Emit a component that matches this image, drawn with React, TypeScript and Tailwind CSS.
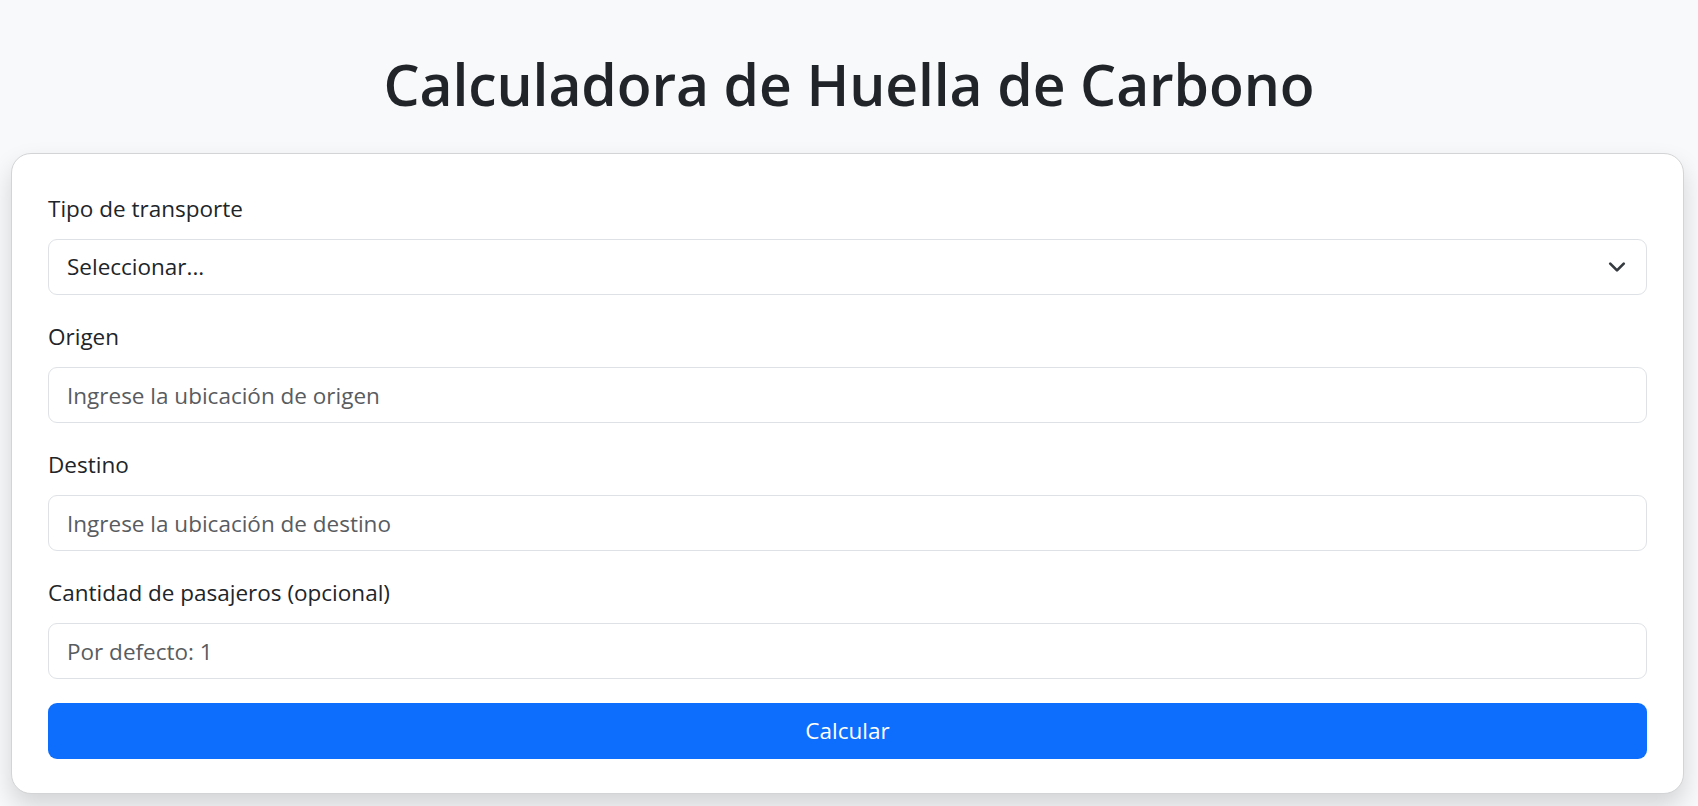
const fields = [
  { label: "Origen", placeholder: "Ingrese la ubicación de origen" },
  { label: "Destino", placeholder: "Ingrese la ubicación de destino" },
  { label: "Cantidad de pasajeros (opcional)", placeholder: "Por defecto: 1" },
];

const App = () => {
  return (
    <div
      className="min-h-screen w-full bg-[#f8f9fa] text-[#212529] pt-[48px] pb-[12px]"
      style={{ fontFamily: '"Open Sans", "Noto Sans", sans-serif' }}
    >
      <h1 className="text-center text-[57px] leading-[72px] font-semibold tracking-[-0.1px] mb-[33px]">
        Calculadora de Huella de Carbono
      </h1>
      <div className="ml-[11px] mr-[14px] bg-white border border-[#d3d4d5] rounded-[20px] shadow-[0_12px_24px_rgba(0,0,0,0.15)] px-[36px] pt-[37px] pb-[34px]">
        <form className="flex flex-col">
          <div className="mb-[24px]">
            <label className="block text-[22.5px] leading-[36px] mb-[12px]">Tipo de transporte</label>
            <div className="relative">
              <select
                defaultValue=""
                className="w-full h-[56px] appearance-none bg-white border border-[#dee2e6] rounded-[9px] pl-[18px] pr-[54px] text-[22.5px] text-[#212529] outline-none"
              >
                <option value="">Seleccionar...</option>
                <option value="auto">Automóvil</option>
                <option value="bus">Autobús</option>
                <option value="avion">Avión</option>
                <option value="tren">Tren</option>
              </select>
              {/* bootstrap-style chevron */}
              <svg
                className="absolute right-[21px] top-1/2 -translate-y-1/2 pointer-events-none"
                width="18"
                height="14"
                viewBox="0 0 16 12"
                fill="none"
                stroke="#343a40"
                strokeWidth="2.4"
                strokeLinecap="round"
                strokeLinejoin="round"
              >
                <path d="m2 3 6 6 6-6" />
              </svg>
            </div>
          </div>
          {fields.map((f) => (
            <div key={f.label} className="mb-[24px]">
              <label className="block text-[22.5px] leading-[36px] mb-[12px]">{f.label}</label>
              <input
                type="text"
                placeholder={f.placeholder}
                className="w-full h-[56px] bg-white border border-[#dee2e6] rounded-[9px] px-[18px] text-[22.5px] text-[#212529] placeholder:text-[#595c5f] outline-none"
              />
            </div>
          ))}
          <button
            type="button"
            className="w-full h-[56px] bg-[#0d6efd] text-white text-[22.5px] rounded-[9px]"
          >
            Calcular
          </button>
        </form>
      </div>
    </div>
  );
};

export default App;
